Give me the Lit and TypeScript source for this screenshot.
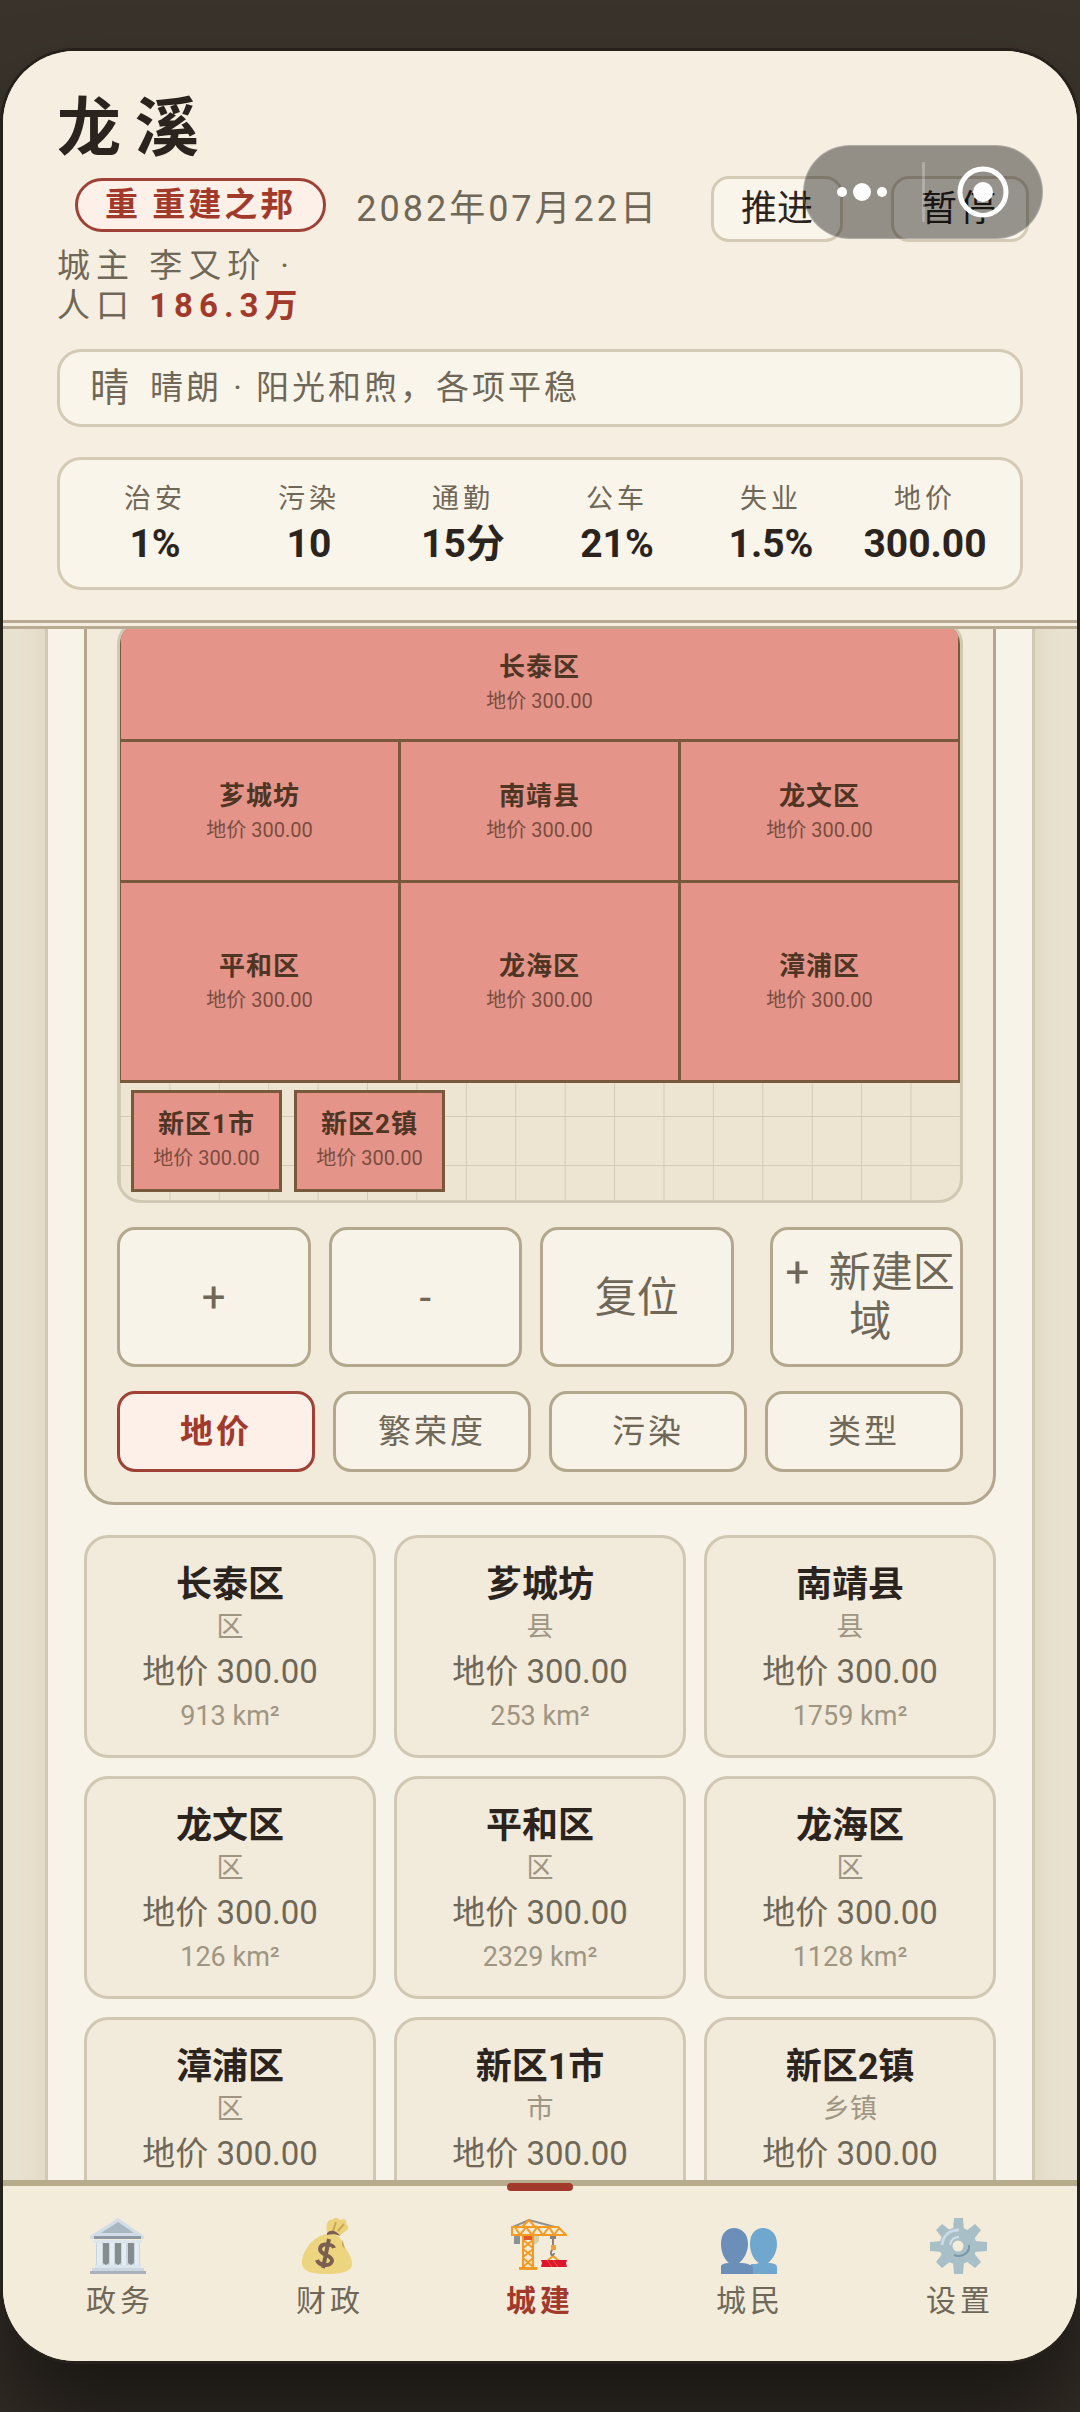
import { css, html, LitElement, nothing, svg } from "lit";
import { customElement, property, state } from "lit/decorators.js";
import { classMap } from "lit/directives/class-map.js";

interface District {
  name: string;
  kind: string;
  price: string;
  area?: number;
}

const DISTRICTS: District[] = [
  { name: "长泰区", kind: "区", price: "300.00", area: 913 },
  { name: "芗城坊", kind: "县", price: "300.00", area: 253 },
  { name: "南靖县", kind: "县", price: "300.00", area: 1759 },
  { name: "龙文区", kind: "区", price: "300.00", area: 126 },
  { name: "平和区", kind: "区", price: "300.00", area: 2329 },
  { name: "龙海区", kind: "区", price: "300.00", area: 1128 },
  { name: "漳浦区", kind: "区", price: "300.00" },
  { name: "新区1市", kind: "市", price: "300.00" },
  { name: "新区2镇", kind: "乡镇", price: "300.00" },
];

const STATS = [
  ["治安", "1%"],
  ["污染", "10"],
  ["通勤", "15分"],
  ["公车", "21%"],
  ["失业", "1.5%"],
  ["地价", "300.00"],
];

const MODES = ["地价", "繁荣度", "污染", "类型"];

const bankIcon = svg`
  <path d="M0 18 28 0 54 18v3H0z" fill="#d3dde6" />
  <path d="M11 15 28 4 44 15z" fill="#a9b7c3" />
  <path d="M4 18h47v3H4z" fill="#8d9aa6" />
  <path d="M3 22h49v3H3zM5 46h46v4H5z" fill="#dce5ec" />
  <path d="M6 25h44v22H6z" fill="#c9d6e2" />
  <path d="M7 25h5v22H7zM20 25h4v22h-4zM32 25h4v22h-4zM45 25h4v22h-4z" fill="#e4ebf1" />
  <path d="M13 25h6v20l-3 2-3-2zM25 25h6v20l-3 2-3-2zM38 25h6v20l-3 2-3-2z" fill="#858c8e" />
  <path d="M2 50h52v3H2z" fill="#cbd6e0" />
  <path d="M0 53h56v3H0z" fill="#a9b1bb" />
`;

const bagIcon = svg`
  <path d="M27 14C25 5 29 1 32 2c3-4 8-1 8 0 4-2 8 0 6 4 4 2 2 6 0 7-3 2-5 3-6 5z" fill="#ebd27b" />
  <path d="m33 13 3-9M38 13l6-7" fill="none" stroke="#c9a758" stroke-width="2" />
  <path d="M28 16c8-1 14 4 16 12 4 6 8 11 8 18 0 8-12 10-25 10S2 54 2 45c0-13 12-28 26-29z" fill="#edd580" />
  <path d="M27 15c4-4 10-2 13 3-4-2-8-2-13-1z" fill="#7c5f50" />
  <path d="M42 22c2 3 2 6 3 9l-3-3z" fill="#c9ab5c" />
  <path d="M34 30c-1-4-13-6-14 1 0 7 12 5 12 12-1 6-13 5-15-1M29 21l-6 29" fill="none" stroke="#7c5f50" stroke-width="4" />
`;

const craneIcon = svg`
  <path d="M3 9 19 2l26 7" fill="none" stroke="#8f8f8f" stroke-width="2" />
  <path d="M4 17h6v9H4z" fill="#8d9297" />
  <path d="M12 18h11v4H12z" fill="#e2572b" />
  <path d="M23 18h6v5l-3 3h-3z" fill="#d8cfa6" />
  <g fill="none" stroke="#f59b23" stroke-width="2">
    <path d="M2 9h46l8 8H2zM12 9l7-7 6 7M5 9l5 8 6-8 6 8 5-8 6 8 6-8 5 8 5-7" />
    <path d="M13 17v33M23 17v33M13 22l10 8M23 22l-10 8M13 31l10 8M23 31l-10 8M13 40l10 9M23 40l-10 9" />
    <path d="m37 43 6-5 6 5" />
  </g>
  <path d="M9 49h18v3H9z" fill="#f59b23" />
  <path d="M40 18h6v3h-6z" fill="#8b8178" />
  <path d="M43 20v7c1 5-3 5-2 9 1 2 3 1 3-1" fill="none" stroke="#8b8178" stroke-width="2" />
  <path d="M41 27h5v5h-5z" fill="#f5a030" />
  <path d="M31 42h26l-1 3 1 4H31l1-4z" fill="#dc1430" />
  <path d="m37 42 5 7M43 42l5 7" stroke="#ee5a24" stroke-width="1" />
`;

const peopleIcon = svg`
  <path d="M30 26c0-11 6-16 13-16s14 5 14 16c0 9-5 16-9 19 5 0 9 1 9 4v7H31V46c3 0 6 0 8-1-5-3-9-10-9-19z" fill="#6fa7cf" />
  <path d="M1 26c0-11 6-16 13-16s14 5 14 16c0 9-5 16-9 19 8 0 14 2 14 5v6H1v-7c0-3 4-4 8-4-4-3-8-10-8-19z" fill="#6b8fb8" />
`;

const gearIcon = svg`
  <g fill="#a9bfc8">
    <path d="M24 0h9l1 12H23zM24 56h9l1-12H23zM0 24v9l12 1V23zM57 24v9l-12 1V23z" />
    <path d="m6 12 6-6 9 7-8 8zM51 12l-6-6-9 7 8 8zM6 44l6 6 9-7-8-8zM51 44l-6 6-9-7 8-8z" />
  </g>
  <circle cx="28" cy="28" r="12" fill="none" stroke="#a9bfc8" stroke-width="13" />
  <path d="M12 27c1-9 7-15 17-15" fill="none" stroke="#c9dbe2" stroke-width="3" />
  <path d="M20 27c1-5 4-8 9-8" fill="none" stroke="#cfe0e6" stroke-width="2" />
  <path d="M39 27c1 8-7 13-15 10" fill="none" stroke="#7998a5" stroke-width="2" />
`;

const TABS = [
  { label: "政务", icon: bankIcon },
  { label: "财政", icon: bagIcon },
  { label: "城建", icon: craneIcon },
  { label: "城民", icon: peopleIcon },
  { label: "设置", icon: gearIcon },
];

@customElement("city-header")
export class CityHeader extends LitElement {
  static override styles = css`
    :host {
      display: block;
      padding: 36px 54px 30px;
      background: #f6eee0;
      border-bottom: 9px double #b8ab92;
      color: #6f6757;
    }

    .title {
      margin: 0;
      font-size: 64px;
      line-height: 84px;
      letter-spacing: 14px;
      color: #2b241e;
    }

    .row {
      display: flex;
      justify-content: space-between;
      align-items: flex-start;
      margin-top: 5px;
    }

    .when {
      display: flex;
      align-items: flex-start;
      gap: 30px;
      padding: 2px 0 0 18px;
    }

    .badge {
      padding: 0 27px;
      border: 3px solid #9f4136;
      border-radius: 27px;
      background: #fcf0e8;
      color: #a23a2c;
      font-size: 33px;
      font-weight: 700;
      line-height: 48px;
      letter-spacing: 3px;
    }

    .date {
      font-size: 36px;
      line-height: 62px;
      letter-spacing: 3px;
    }

    .actions {
      display: flex;
      gap: 48px;
      margin-right: -6px;
    }

    .action {
      padding: 0 27px;
      border: 3px solid #d4cab5;
      border-radius: 18px;
      background: #faf5ea;
      color: #2b241e;
      font: inherit;
      font-size: 36px;
      line-height: 60px;
    }

    .action.wide {
      letter-spacing: 3px;
    }

    .facts {
      margin: 4px 0 0;
      font-size: 33px;
      line-height: 40px;
      letter-spacing: 6px;
    }

    .people {
      color: #a23a2c;
    }

    .weather,
    .stats {
      border: 3px solid #d4cab5;
      border-radius: 24px;
      background: #faf5ea;
    }

    .weather {
      display: flex;
      align-items: center;
      gap: 21px;
      margin-top: 23px;
      padding: 0 30px;
      font-size: 33px;
      line-height: 72px;
      letter-spacing: 3px;
    }

    .mark {
      font-size: 39px;
      letter-spacing: 0;
    }

    .stats {
      display: grid;
      grid-template-columns: repeat(6, 1fr);
      margin: 30px 0 0;
      padding: 18px;
      text-align: center;
    }

    .label {
      font-size: 27px;
      line-height: 42px;
      letter-spacing: 4px;
    }

    .value {
      margin: 0;
      color: #2b241e;
      font-size: 39px;
      font-weight: 700;
      line-height: 49px;
    }
  `;

  override render() {
    return html`
      <h1 class="title">龙溪</h1>
      <div class="row">
        <div class="when">
          <span class="badge">重 重建之邦</span>
          <time class="date" datetime="2082-07-22">2082年07月22日</time>
        </div>
        <div class="actions">
          <button class="action">推进</button>
          <button class="action wide">暂停</button>
        </div>
      </div>
      <p class="facts">
        城主 李又玠 ·<br />人口 <b class="people">186.3万</b>
      </p>
      <div class="weather">
        <span class="mark">晴</span><span>晴朗 · 阳光和煦，各项平稳</span>
      </div>
      <dl class="stats">
        ${STATS.map(
          ([label, value]) => html`
            <div>
              <dt class="label">${label}</dt>
              <dd class="value">${value}</dd>
            </div>
          `
        )}
      </dl>
    `;
  }
}

@customElement("city-map")
export class CityMap extends LitElement {
  static override styles = css`
    :host {
      display: block;
      overflow: hidden;
      border: 3px solid #d0c8b2;
      border-radius: 24px;
      background-color: #ede5d2;
      background-image: linear-gradient(90deg, #d3cbb4 1px, transparent 1px),
        linear-gradient(#d3cbb4 1px, transparent 1px);
      background-size: calc(100% / 17) 49px;
      background-position: 0 calc(100% + 14px);
    }

    /* The borders between the districts are the gaps of the grid */
    .land {
      display: grid;
      grid-template-columns: repeat(3, 1fr);
      grid-template-rows: 114px 138px 197px;
      gap: 3px;
      padding: 2px 2px 3px 1px;
      background: #79593c;
    }

    .cell {
      display: flex;
      flex-direction: column;
      align-items: center;
      justify-content: center;
      padding: 3px 0 0;
      border: 0;
      background: #e5948a;
      color: #4f3524;
      font: inherit;
    }

    .cell.full {
      grid-column: 1 / -1;
    }

    .name {
      font-size: 26px;
      font-weight: 700;
      line-height: 34px;
      letter-spacing: 1px;
    }

    .price {
      color: #7a4c3e;
      font-size: 20px;
      line-height: 34px;
    }

    .lots {
      display: flex;
      gap: 12px;
      padding: 7px 11px 8px;
    }

    .lots .cell {
      width: 151px;
      height: 102px;
      padding: 0;
      border: 3px solid #79593c;
    }
  `;

  @property({ attribute: false })
  districts: District[] = [];

  private _cell(district: District, full = false) {
    return html`
      <button class=${classMap({ cell: true, full })}>
        <span class="name">${district.name}</span>
        <span class="price">地价 ${district.price}</span>
      </button>
    `;
  }

  override render() {
    return html`
      <div class="land">
        ${this.districts.slice(0, 7).map((d, i) => this._cell(d, i === 0))}
      </div>
      <div class="lots">${this.districts.slice(7).map((d) => this._cell(d))}</div>
    `;
  }
}

@customElement("city-tabs")
export class CityTabs extends LitElement {
  static override styles = css`
    :host {
      display: grid;
      grid-template-columns: repeat(5, 1fr);
      padding: 0 12px;
      border-top: 6px solid #b7ab8d;
      background: #f4ecdb;
    }

    .tab {
      position: relative;
      display: flex;
      flex-direction: column;
      align-items: center;
      gap: 6px;
      padding: 32px 0 39px;
      border: 0;
      background: none;
      color: #6f6757;
      font: inherit;
      font-size: 30px;
      line-height: 42px;
      letter-spacing: 4px;
    }

    .icon {
      width: 57px;
      height: 56px;
      margin-right: 4px;
    }

    .tab.on {
      color: #a23a2c;
      font-weight: 700;
    }

    /* Red marker that lies over the top border of the bar */
    .tab.on::before {
      content: "";
      position: absolute;
      top: -3px;
      left: calc(50% - 33px);
      width: 66px;
      height: 8px;
      border-radius: 4px;
      background: #a23a2c;
    }
  `;

  @state()
  private _active = 2;

  override render() {
    return html`
      ${TABS.map(
        (tab, i) => html`
          <button
            class=${classMap({ tab: true, on: i === this._active })}
            @click=${() => (this._active = i)}
          >
            <svg class="icon" viewBox="0 0 57 56" aria-hidden="true">${tab.icon}</svg>
            <span>${tab.label}</span>
          </button>
        `
      )}
    `;
  }
}

@customElement("app-root")
export class AppRoot extends LitElement {
  static override styles = css`
    :host {
      display: flex;
      flex-direction: column;
      box-sizing: border-box;
      height: 100vh;
      padding: 51px 3px;
      overflow: hidden;
      background: linear-gradient(#39332b, #332d26);
      font-family: Roboto, "Noto Sans CJK SC", sans-serif;
    }

    .phone {
      position: relative;
      display: flex;
      flex: 1;
      flex-direction: column;
      min-height: 0;
      border-radius: 72px;
      background: #e9e1cf;
      box-shadow: 0 0 0 3px #26211a, 0 60px 90px rgba(0, 0, 0, 0.5);
    }

    .header {
      border-radius: 72px 72px 0 0;
    }

    .tabs {
      border-radius: 0 0 72px 72px;
    }

    .body {
      flex: 1;
      min-height: 0;
      padding: 0 42px;
      overflow: hidden;
    }

    .page {
      padding: 0 36px 36px;
      border: solid #d0c8b2;
      border-width: 0 3px;
      background: #f8f3e8;
      box-shadow: 0 0 24px rgba(120, 100, 60, 0.1);
    }

    /* The list is scrolled down, the top of this card is out of view */
    .card {
      display: flex;
      flex-direction: column;
      gap: 24px;
      margin-top: -42px;
      padding: 30px;
      border: 3px solid #b3a88d;
      border-radius: 30px;
      background: #f2eadb;
    }

    /* The empty fourth column sets the last tool apart */
    .tools {
      display: grid;
      grid-template-columns: 1fr 1fr 1fr 0 1fr;
      gap: 18px;
    }

    .modes {
      display: grid;
      grid-template-columns: repeat(4, 1fr);
      gap: 18px;
    }

    .tool,
    .mode {
      min-width: 0;
      padding: 0;
      border: 3px solid #b3a88d;
      border-radius: 18px;
      background: #f8f3e8;
      color: #6f6757;
      font: inherit;
    }

    .tool {
      min-height: 140px;
      font-size: 42px;
      line-height: 49px;
    }

    .tool.add {
      grid-column: 5;
      padding-left: 8px;
    }

    .plus {
      margin-right: 9px;
    }

    .mode {
      font-size: 33px;
      line-height: 75px;
      letter-spacing: 3px;
    }

    .mode.on {
      border-color: #9f4136;
      background: #fcf0e8;
      color: #a23a2c;
      font-weight: 700;
    }

    .list {
      display: grid;
      grid-template-columns: repeat(3, 1fr);
      gap: 18px;
      margin-top: 30px;
    }

    .district {
      display: flex;
      flex-direction: column;
      align-items: center;
      gap: 5px;
      padding: 26px 0 23px;
      border: 3px solid #d0c8b2;
      border-radius: 24px;
      background: #f2eadb;
      font: inherit;
    }

    .name {
      color: #2b241e;
      font-size: 36px;
      font-weight: 700;
      line-height: 42px;
    }

    .kind,
    .area {
      color: #9f9583;
      font-size: 27px;
      line-height: 32px;
    }

    .price {
      color: #6f6757;
      font-size: 33px;
      line-height: 47px;
    }

    /* Mini-program menu that floats over the header */
    .capsule {
      position: absolute;
      top: 94px;
      right: 34px;
      display: flex;
      align-items: center;
      box-sizing: border-box;
      width: 240px;
      height: 94px;
      border: 1px solid rgba(255, 255, 255, 0.25);
      border-radius: 47px;
      background: rgba(0, 0, 0, 0.4);
    }

    .capsule-button {
      display: flex;
      flex: 1;
      justify-content: center;
      padding: 0;
      border: 0;
      background: none;
    }

    .capsule-line {
      width: 3px;
      height: 60px;
      background: rgba(255, 255, 255, 0.25);
    }
  `;

  @state()
  private _mode = 0;

  override render() {
    return html`
      <div class="phone">
        <city-header class="header"></city-header>
        <main class="body">
          <div class="page">
            <section class="card">
              <city-map .districts=${DISTRICTS}></city-map>
              <div class="tools">
                <button class="tool">+</button>
                <button class="tool">-</button>
                <button class="tool">复位</button>
                <button class="tool add"><span class="plus">+</span> 新建区域</button>
              </div>
              <div class="modes">
                ${MODES.map(
                  (mode, i) => html`
                    <button
                      class=${classMap({ mode: true, on: i === this._mode })}
                      @click=${() => (this._mode = i)}
                    >${mode}</button>
                  `
                )}
              </div>
            </section>
            <div class="list">
              ${DISTRICTS.map(
                (d) => html`
                  <button class="district">
                    <span class="name">${d.name}</span>
                    <span class="kind">${d.kind}</span>
                    <span class="price">地价 ${d.price}</span>
                    ${d.area ? html`<span class="area">${d.area} km²</span>` : nothing}
                  </button>
                `
              )}
            </div>
          </div>
        </main>
        <city-tabs class="tabs"></city-tabs>
        <div class="capsule">
          <button class="capsule-button" aria-label="更多">
            <svg width="54" height="52" viewBox="0 0 54 52" fill="#fff">
              <circle cx="6" cy="26" r="5" />
              <circle cx="26" cy="26" r="9" />
              <circle cx="46" cy="26" r="5" />
            </svg>
          </button>
          <span class="capsule-line"></span>
          <button class="capsule-button" aria-label="关闭">
            <svg width="52" height="52" viewBox="0 0 52 52">
              <circle cx="26" cy="26" r="23" fill="none" stroke="#fff" stroke-width="5" />
              <circle cx="26" cy="26" r="10" fill="#fff" />
            </svg>
          </button>
        </div>
      </div>
    `;
  }
}
